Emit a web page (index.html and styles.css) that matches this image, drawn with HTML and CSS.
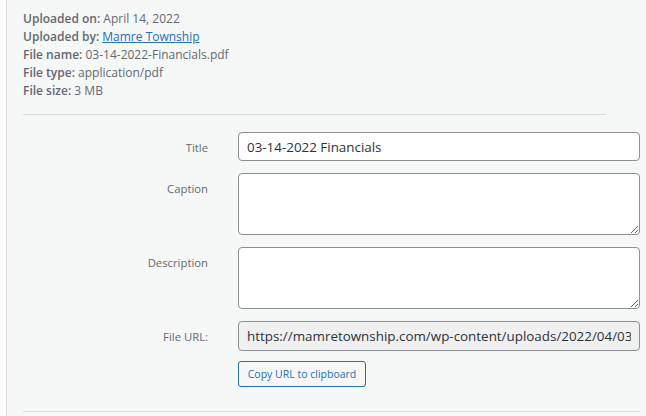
FILE: index.html
```html
<!DOCTYPE html>
<html lang="en">
<head>
<meta charset="utf-8">
<title>Attachment details</title>
<link rel="stylesheet" href="styles.css">
</head>
<body>
<div class="frame">
  <div class="gutter"></div>
  <aside class="sidebar">
    <section class="info">
      <div class="details">
        <div class="line"><strong>Uploaded on:</strong> April 14, 2022</div>
        <div class="line"><strong>Uploaded by:</strong> <a href="#" class="link">Mamre Township</a></div>
        <div class="line"><strong>File name:</strong> 03-14-2022-Financials.pdf</div>
        <div class="line"><strong>File type:</strong> application/pdf</div>
        <div class="line"><strong>File size:</strong> 3 MB</div>
      </div>
    </section>
    <section class="settings">
      <div class="setting">
        <label class="name" for="title">Title</label>
        <input id="title" class="field field-title" type="text" value="03-14-2022 Financials">
      </div>
      <div class="setting">
        <label class="name" for="caption">Caption</label>
        <textarea id="caption" class="field area"></textarea>
      </div>
      <div class="setting">
        <label class="name" for="desc">Description</label>
        <textarea id="desc" class="field area"></textarea>
      </div>
      <div class="setting">
        <label class="name" for="url">File URL:</label>
        <div class="url-col">
          <input id="url" class="field field-url" type="text" readonly value="https://mamretownship.com/wp-content/uploads/2022/04/03-14-2022-Financials.pdf">
          <button class="copy-btn" type="button">Copy URL to clipboard</button>
        </div>
      </div>
    </section>
  </aside>
</div>
</body>
</html>
```

FILE: styles.css
```css
* { box-sizing: border-box; }

html, body {
  margin: 0;
  padding: 0;
  background: #fff;
  font-family: "Open Sans", "Noto Sans", "Liberation Sans", sans-serif;
  color: #646970;
}

.frame {
  display: flex;
  width: 646px;
  height: 416px;
  overflow: hidden;
}

.gutter {
  flex: 0 0 6px;
  background: #fff;
}

.sidebar {
  flex: 1 1 auto;
  background: #f6f7f7;
  border-left: 1px solid #dcdcde;
  padding-left: 16px;
  min-width: 0;
}

.info {
  width: 583px;
  padding-top: 10px;
  padding-bottom: 14px;
  border-bottom: 1px solid #dcdcde;
}

.details {
  font-size: 12px;
  line-height: 18px;
  color: #646970;
}

.details strong {
  font-weight: 600;
  color: #646970;
}

.link {
  color: #2271b1;
  text-decoration: underline;
}

.settings {
  width: 617px;
  margin-top: 17px;
  padding-bottom: 24px;
  border-bottom: 1px solid #dcdcde;
  display: flex;
  flex-direction: column;
  gap: 12px;
}

.setting {
  display: grid;
  grid-template-columns: 185px 402px;
  column-gap: 30px;
  align-items: start;
}

.name {
  text-align: right;
  font-size: 11.3px;
  line-height: 16px;
  padding-top: 8px;
  color: #646970;
}

.field {
  display: block;
  width: 402px;
  margin: 0;
  border: 1px solid #8c8f94;
  border-radius: 4px;
  background: #fff;
  color: #2c3338;
  font-family: inherit;
  font-size: 13.4px;
  padding: 0 8px;
  outline: none;
}

.field-title {
  height: 29px;
  line-height: 27px;
}

.field-url {
  height: 30px;
  line-height: 28px;
  background: #f0f0f1;
}

.area {
  height: 62px;
  resize: vertical;
  padding: 2px 6px;
  line-height: 1.4;
}

.url-col {
  display: flex;
  flex-direction: column;
  align-items: flex-start;
}

.copy-btn {
  margin-top: 10px;
  height: 26px;
  width: 128px;
  padding: 0 6px;
  font-family: inherit;
  font-size: 10.5px;
  line-height: 24px;
  color: #2271b1;
  background: #f6f7f7;
  border: 1px solid #2271b1;
  border-radius: 3px;
  cursor: pointer;
  white-space: nowrap;
}
```
